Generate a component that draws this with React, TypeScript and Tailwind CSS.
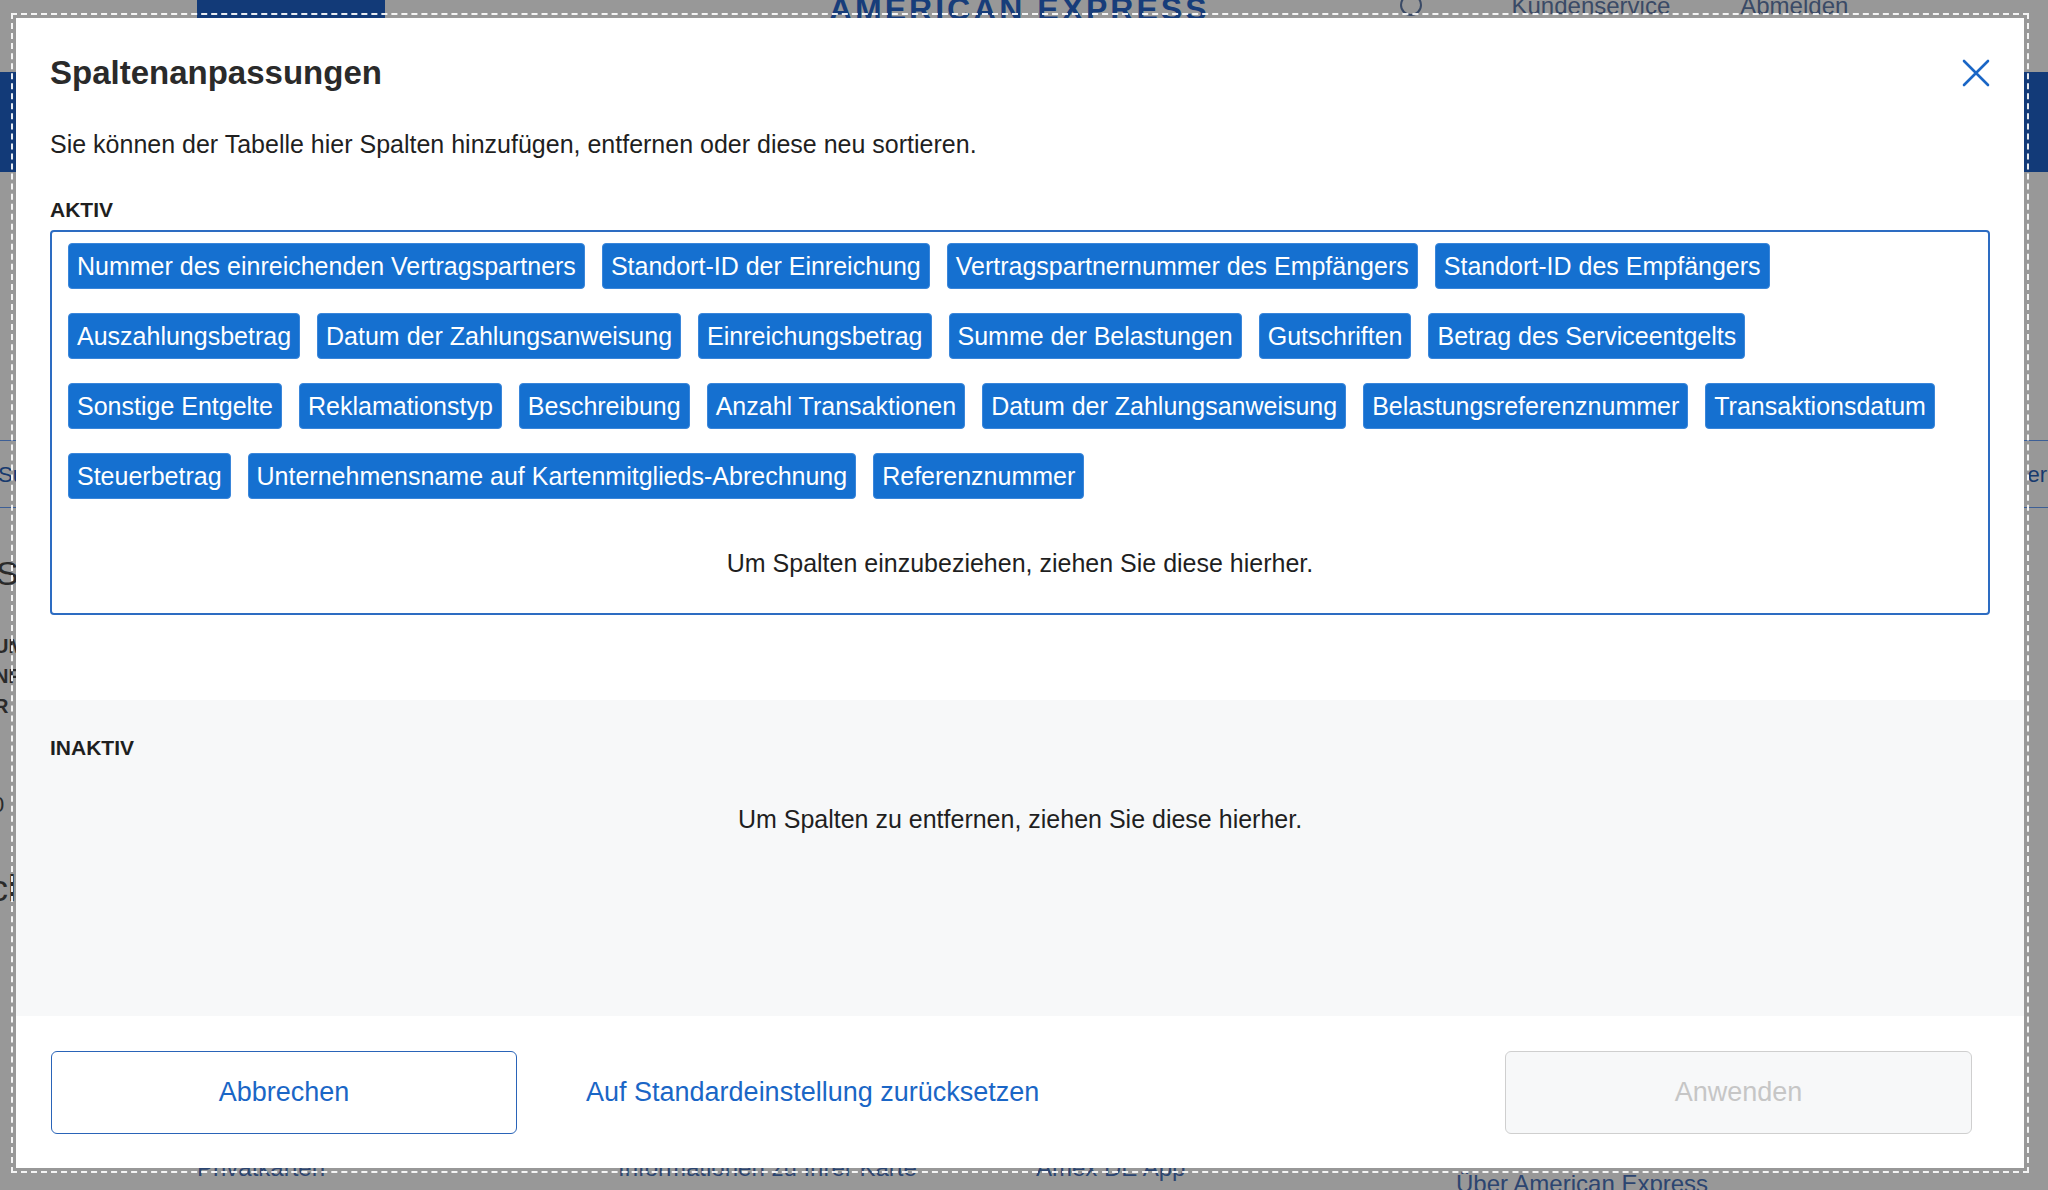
import React from 'react';

const activeColumns: string[] = [
  'Nummer des einreichenden Vertragspartners',
  'Standort-ID der Einreichung',
  'Vertragspartnernummer des Empfängers',
  'Standort-ID des Empfängers',
  'Auszahlungsbetrag',
  'Datum der Zahlungsanweisung',
  'Einreichungsbetrag',
  'Summe der Belastungen',
  'Gutschriften',
  'Betrag des Serviceentgelts',
  'Sonstige Entgelte',
  'Reklamationstyp',
  'Beschreibung',
  'Anzahl Transaktionen',
  'Datum der Zahlungsanweisung',
  'Belastungsreferenznummer',
  'Transaktionsdatum',
  'Steuerbetrag',
  'Unternehmensname auf Kartenmitglieds-Abrechnung',
  'Referenznummer',
];

// rows of the chip layout, matches how the reference wraps
const rows = [activeColumns.slice(0, 4), activeColumns.slice(4, 10), activeColumns.slice(10, 17), activeColumns.slice(17)];

// the page behind the overlay, only slivers of it show
const BackgroundPage: React.FC = () => (
  <div className="h-[1190px] w-full overflow-hidden bg-[#989898] flex flex-col text-[#173a6e]">
    <div className="h-[72px] flex items-start">
      <div className="ml-[197px] w-[188px] h-[18px] bg-[#123a78]" />
      <div className="ml-[444px] -mt-[4px] text-[32px] font-bold tracking-[3px] text-[#173d7a] leading-[26px]">AMERICAN EXPRESS</div>
      <div className="ml-[190px] -mt-[6px] w-[22px] h-[22px] rounded-full border-2 border-[#3a4a66]" />
      <div className="ml-[90px] -mt-[4px] flex gap-[70px] text-[24px] leading-[20px] text-[#3a4a66]">
        <span>Kundenservice</span>
        <span>Abmelden</span>
      </div>
    </div>
    <div className="h-[100px] bg-[#123a78]" />
    <div className="h-[268px]" />
    <div className="h-[68px] border-y border-[#3d5f96] flex items-center justify-between text-[22px]">
      <span className="-ml-[2px]">Su</span>
      <span className="-mr-[4px]">erl</span>
    </div>
    <div className="pl-0 text-[#2a2a2a] flex flex-col">
      <span className="mt-[45px] -ml-[4px] text-[34px] leading-[40px]">Sg</span>
      <span className="mt-[38px] -ml-[6px] text-[20px] font-bold leading-[30px]">UM</span>
      <span className="-ml-[6px] text-[20px] font-bold leading-[30px]">NF</span>
      <span className="-ml-[6px] text-[20px] font-bold leading-[30px]">R</span>
      <span className="mt-[70px] -ml-[8px] text-[22px] leading-[28px]">0</span>
      <span className="mt-[50px] -ml-[10px] text-[36px] leading-[40px]">cl</span>
    </div>
    <div className="flex-1" />
    <div className="h-[34px] flex items-start pl-[197px] text-[24px] leading-[24px] text-[#2c4570]">
      <span className="w-[421px]">Privatkarten</span>
      <span className="w-[418px]">Informationen zu Ihrer Karte</span>
      <span className="w-[420px]">Amex DE App</span>
      <span className="mt-[16px]">Über American Express</span>
    </div>
  </div>
);

const CloseIcon: React.FC = () => (
  <svg width="28" height="28" viewBox="0 0 28 28" fill="none">
    <path d="M2 2 L26 26 M26 2 L2 26" stroke="#1a66c6" strokeWidth="2.6" strokeLinecap="round" />
  </svg>
);

const Chip: React.FC<{ label: string }> = ({ label }) => (
  <div className="h-[46px] px-[8px] flex items-center rounded-[4px] bg-[#1570d0] border border-[#3a86da] text-white text-[25px] leading-none whitespace-nowrap">
    {label}
  </div>
);

export default function App() {
  return (
    <div className="relative w-full h-[1190px] overflow-hidden" style={{ fontFamily: '"Liberation Sans", Arial, sans-serif' }}>
      <BackgroundPage />
      <div className="absolute left-[16px] top-[18px] w-[2008px] h-[1150px] bg-white outline-2 outline-dashed outline-white/90 outline-offset-[3px] flex flex-col">
        <div className="px-[34px] pt-[35px]">
          <div className="flex items-center justify-between">
            <h2 className="text-[33px] leading-[40px] font-bold text-[#2a2a2a]">Spaltenanpassungen</h2>
            <button className="w-[28px] h-[28px] flex items-center justify-center">
              <CloseIcon />
            </button>
          </div>
          <p className="mt-[35px] text-[25px] leading-[32px] text-[#1f1f1f]">
            Sie können der Tabelle hier Spalten hinzufügen, entfernen oder diese neu sortieren.
          </p>
          <div className="mt-[38px] text-[21px] leading-[24px] font-bold text-[#1f1f1f]">AKTIV</div>
          <div className="mt-[8px] border-2 border-[#2d6cc2] rounded-[4px] pt-[11px] px-[16px] pb-[34px]">
            <div className="flex flex-col gap-[24px]">
              {rows.map((row, i) => (
                <div key={i} className="flex gap-[17px]">
                  {row.map((c, j) => (
                    <Chip key={j} label={c} />
                  ))}
                </div>
              ))}
            </div>
            <p className="mt-[48px] text-center text-[25px] leading-[32px] text-[#1f1f1f]">
              Um Spalten einzubeziehen, ziehen Sie diese hierher.
            </p>
          </div>
        </div>
        <div className="mt-[85px] h-[316px] bg-[#f7f8f9] px-[34px] pt-[36px]">
          <div className="text-[21px] leading-[24px] font-bold text-[#1f1f1f]">INAKTIV</div>
          <p className="mt-[43px] text-center text-[25px] leading-[32px] text-[#1f1f1f]">
            Um Spalten zu entfernen, ziehen Sie diese hierher.
          </p>
        </div>
        <div className="pl-[35px] pr-[52px] pt-[35px] flex items-center">
          <button className="w-[466px] h-[83px] rounded-[6px] border-[1.5px] border-[#2a64b8] text-[27px] text-[#1a66c6] bg-white">
            Abbrechen
          </button>
          <button className="ml-[69px] text-[27px] text-[#1a66c6]">Auf Standardeinstellung zurücksetzen</button>
          <button
            disabled
            className="ml-auto w-[467px] h-[83px] rounded-[6px] border-[1.5px] border-[#cfcfcf] bg-[#f7f8f9] text-[27px] text-[#c6c6c6]"
          >
            Anwenden
          </button>
        </div>
      </div>
    </div>
  );
}
